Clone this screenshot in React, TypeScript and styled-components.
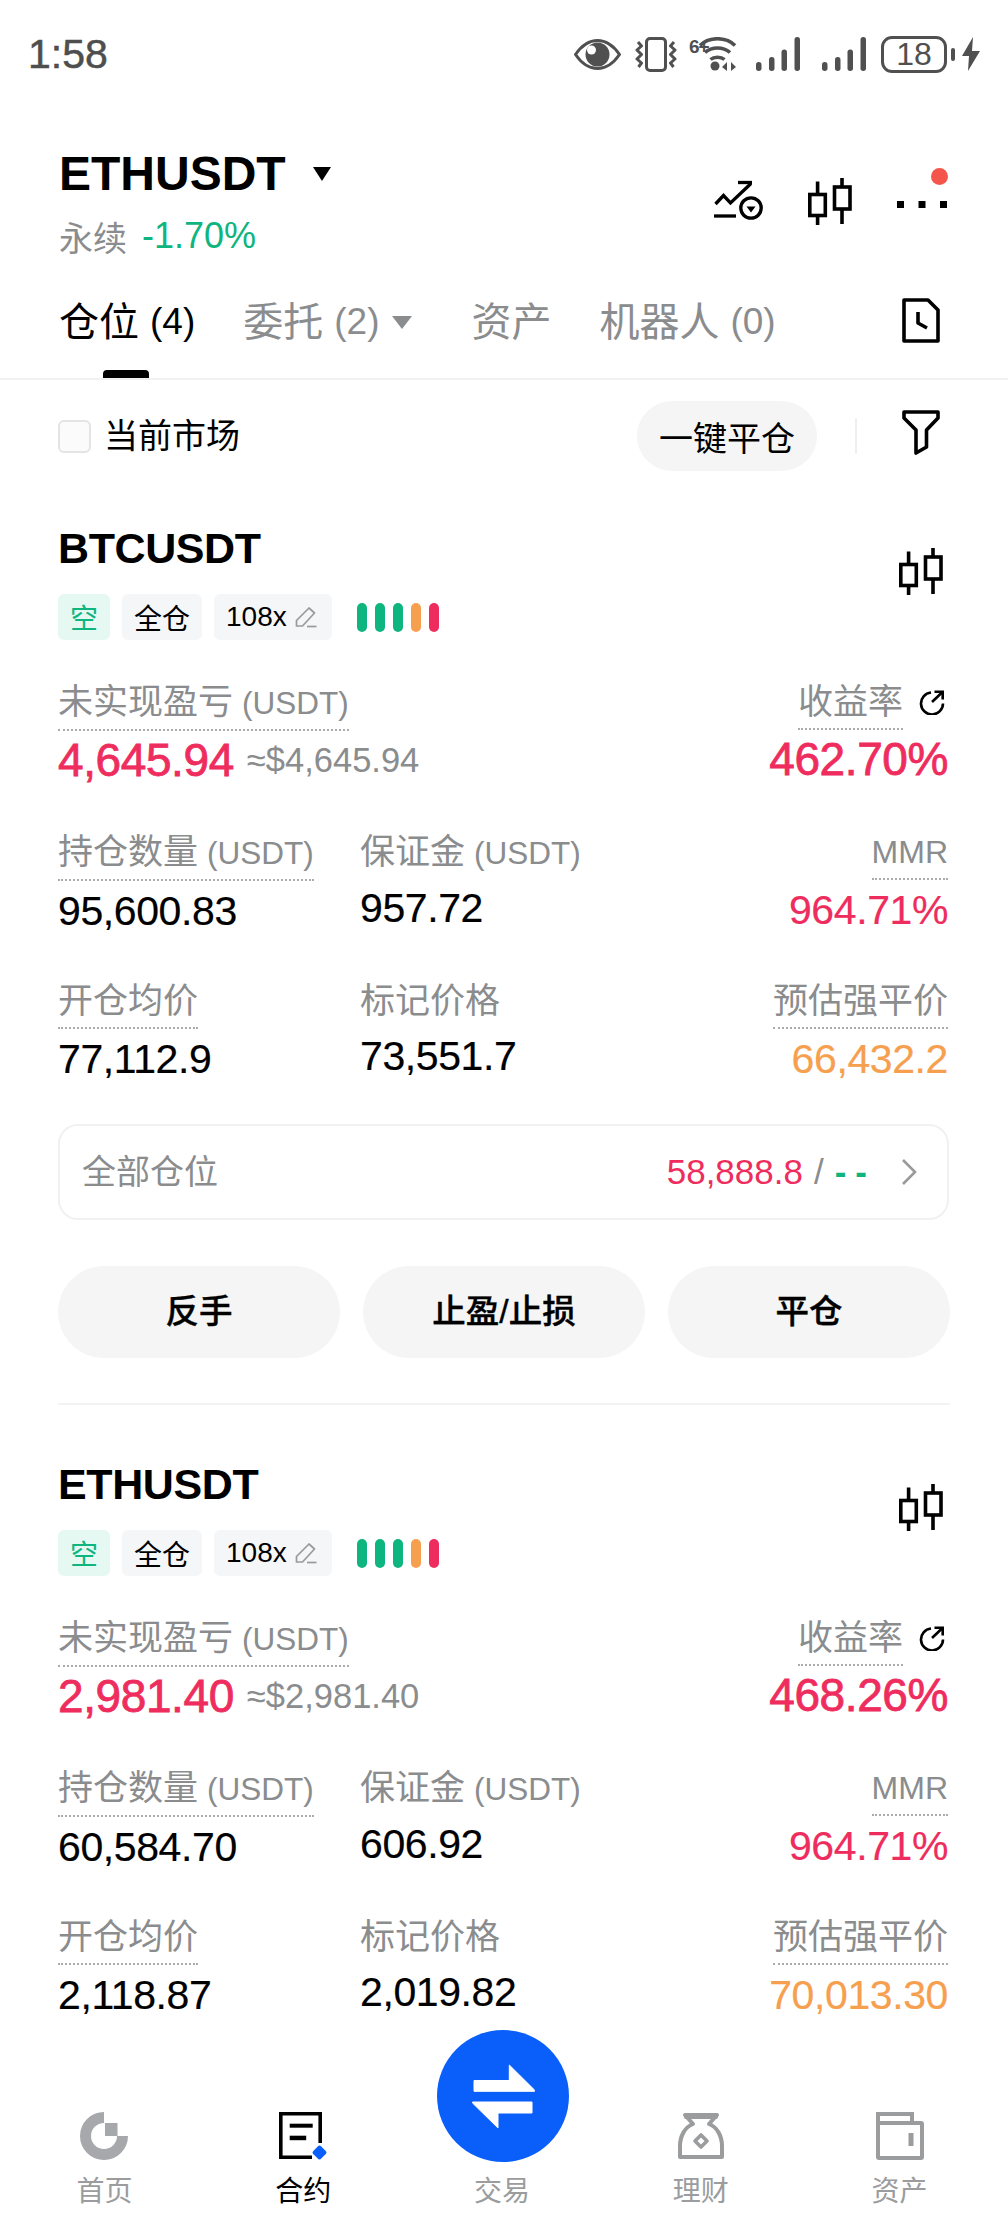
import React from "react";
import styled, { createGlobalStyle } from "styled-components";

const Global = createGlobalStyle`
  html, body { margin: 0; padding: 0; background: #fff; }
  body { font-family: "Liberation Sans", "Noto Sans CJK SC", sans-serif; color: #000; }
  * { box-sizing: border-box; }
`;

const RED = "#ee2d5e";
const GREEN = "#0fb57f";
const ORANGE = "#f6a04f";
const GREY = "#8a8c8e";

const Page = styled.div`
  width: 1008px; height: 2232px; overflow: hidden; display: flex; flex-direction: column; background: #fff;
`;
const StatusBar = styled.div`
  height: 108px; flex: none; display: flex; align-items: center; justify-content: space-between; padding: 0 28px 0 28px; color: #505050;
`;
const Time = styled.span`font-size: 41px; line-height: 48px; color: #4e4e4e; -webkit-text-stroke: 0.5px #4e4e4e;`;
const StatusIcons = styled.div`display: flex; align-items: center;`;
const StatusSlot = styled.span<{ $ml: number }>`
  display: flex; margin-left: ${p => p.$ml}px;
  svg { display: block; }
`;
const Battery = styled.span`
  position: relative; width: 66px; height: 37px; border: 3px solid #505050; border-radius: 11px;
  display: flex; align-items: center; justify-content: center; font-size: 32px; line-height: 1; color: #505050; margin-left: 15px;
  &::after { content: ""; position: absolute; right: -11px; top: 9px; width: 4px; height: 13px; border-radius: 2px; background: #505050; }
`;

const Header = styled.header`flex: none; padding: 38px 0 0 59px; display: flex; justify-content: space-between; height: 148px;`;
const TitleBlock = styled.div`display: flex; flex-direction: column;`;
const TitleRow = styled.div`display: flex; align-items: center; height: 56px;`;
const Title = styled.h1`margin: 0; font-size: 48px; line-height: 56px; font-weight: 700;`;
const Caret = styled.span<{ $color: string; $w: number; $h: number; $ml: number }>`
  display: inline-block; margin-left: ${p => p.$ml}px; width: 0; height: 0;
  border-left: ${p => p.$w / 2}px solid transparent; border-right: ${p => p.$w / 2}px solid transparent;
  border-top: ${p => p.$h}px solid ${p => p.$color};
`;
const SubRow = styled.div`display: flex; align-items: center; height: 40px; margin-top: 14px;`;
const SubLabel = styled.span`font-size: 34px; color: ${GREY};`;
const SubChange = styled.span`font-size: 36px; color: ${GREEN}; margin-left: 15px;`;
const HeaderIcons = styled.div`display: flex; align-items: flex-start; padding: 32px 61px 0 0; position: relative;`;
const HeaderIcon = styled.span<{ $ml: number; $mt: number }>`
  display: flex; margin-left: ${p => p.$ml}px; margin-top: ${p => p.$mt}px;
  svg { display: block; }
`;
const RedDot = styled.span`
  position: absolute; right: 60px; top: 22px; width: 17px; height: 17px; border-radius: 50%; background: #f4564c;
`;

const Tabs = styled.nav`
  flex: none; height: 82px; margin-top: 42px; padding: 0 68px 0 59px; display: flex; align-items: flex-start; gap: 48px; border-bottom: 2px solid #f1f1f1;
`;
const Tab = styled.span<{ $active?: boolean; $ml?: number }>`
  position: relative; height: 48px; font-size: 40px; line-height: 48px; display: flex; align-items: center; color: ${p => (p.$active ? "#000" : GREY)};
  margin-left: ${p => p.$ml || 0}px;
  ${p => p.$active && `&::after { content: ""; position: absolute; left: 44px; top: 72px; width: 46px; height: 8px; border-radius: 4px 4px 0 0; background: #000; }`}
`;
const TabCount = styled.span`font-size: 37px; margin-left: 11px;`;
const TabSpacer = styled.span`flex: 1;`;
const TabIcon = styled.span`display: flex; svg { display: block; }`;

const Toolbar = styled.div`flex: none; height: 95px; padding: 21px 68px 4px 58px; display: flex; align-items: center;`;
const Check = styled.label`display: flex; align-items: center; gap: 13px; font-size: 34px; line-height: 40px; flex: 1;`;
const CheckBox = styled.span`width: 33px; height: 33px; border: 2px solid #e4e4e4; border-radius: 6px; background: #fbfbfb;`;
const CloseAll = styled.button`
  width: 180px; height: 70px; border: 0; border-radius: 35px; background: #f5f5f5; font: inherit; font-size: 34px; color: #000; padding: 0;
`;
const ToolSep = styled.span`width: 2px; height: 36px; background: #f0f0f0; margin: 0 45px 0 38px;`;
const ToolIcon = styled.span`display: flex; margin-top: -7px; svg { display: block; }`;

const Body = styled.main`flex: 1; min-height: 0; overflow: hidden;`;
const Card = styled.section`padding: 49px 60px 45px 58px;`;
const Divider = styled.hr`margin: 0 58px 6px; border: 0; height: 2px; background: #f3f3f3;`;
const CardHead = styled.div`display: flex; justify-content: space-between; align-items: flex-start;`;
const Symbol = styled.h2`margin: 0; font-size: 43px; line-height: 48px; font-weight: 700; letter-spacing: -0.4px;`;
const Tags = styled.div`display: flex; align-items: center; gap: 12px; margin-top: 22px;`;
const Tag = styled.span<{ $short?: boolean; $pr?: number }>`
  height: 46px; padding: 0 ${p => p.$pr || 12}px 0 12px; border-radius: 6px; font-size: 28px; display: flex; align-items: center; gap: 8px;
  background: ${p => (p.$short ? "#e5f9f2" : "#f5f6f8")}; color: ${p => (p.$short ? GREEN : "#000")};
`;
const Bars = styled.span`display: flex; gap: 8px; margin-left: 13px;`;
const Bar = styled.i<{ $color: string }>`width: 10px; height: 29px; border-radius: 5px; background: ${p => p.$color}; display: block;`;
const HeadIcon = styled.span`display: flex; margin: 24px 5px 0 0; svg { display: block; }`;

const Metrics = styled.div<{ $mt: number }>`display: grid; grid-template-columns: 302px 1fr auto; margin-top: ${p => p.$mt}px;`;
const Metric = styled.div<{ $right?: boolean; $wide?: boolean }>`
  display: flex; flex-direction: column; align-items: ${p => (p.$right ? "flex-end" : "flex-start")};
  ${p => p.$wide && "grid-column: 1 / span 2;"}
`;
const LabelRow = styled.div`display: flex; align-items: flex-start; gap: 16px;`;
const Label = styled.span<{ $plain?: boolean; $latin?: boolean }>`
  font-size: ${p => (p.$latin ? 32 : 35)}px; line-height: 40px; color: ${GREY}; padding-bottom: 6px; white-space: nowrap;
  border-bottom: 2px dotted ${p => (p.$plain ? "transparent" : "#a9abad")};
`;
const Unit = styled.span`font-size: 31.5px; margin-left: 9px;`;
const Value = styled.div<{ $color?: string; $big?: boolean; $plain?: boolean }>`
  height: 48px; display: flex; align-items: center;
  font-size: ${p => (p.$big ? 46 : 41)}px; line-height: 48px; color: ${p => p.$color || "#000"};
  letter-spacing: -0.4px;
  -webkit-text-stroke: ${p => (p.$big ? 0.8 : 0.2)}px ${p => p.$color || "#000"};
  margin-top: ${p => (p.$plain ? 3 : p.$big ? 5 : 6)}px; white-space: nowrap;
`;
const ValueNote = styled.span`font-size: 34.5px; letter-spacing: 0; -webkit-text-stroke: 0; color: ${GREY}; margin-left: 13px;`;
const IconInline = styled.span`display: flex; margin: 7px 3px 0 0; svg { display: block; }`;

const Summary = styled.div`
  margin-top: 41px; height: 96px; border: 2px solid #f1f1f1; border-radius: 20px; display: flex; align-items: center; padding: 0 30px 0 22px; margin-right: -1px;
`;
const SummaryLabel = styled.span`font-size: 34px; color: ${GREY}; flex: 1; margin-top: -6px;`;
const SummaryValue = styled.span`font-size: 35px; color: ${RED};`;
const SummarySlash = styled.span`font-size: 35px; color: ${GREY}; margin: 0 11px;`;
const SummaryDash = styled.span`font-size: 35px; font-weight: 700; color: ${GREEN}; letter-spacing: 9px; margin-right: 25px;`;
const Actions = styled.div`display: grid; grid-template-columns: repeat(3, 1fr); gap: 23px; margin-top: 46px; margin-right: -2px;`;
const Action = styled.button`
  height: 92px; border: 0; border-radius: 46px; background: #f5f5f5; font: inherit; font-size: 33.5px; font-weight: 500; color: #000; padding: 0 0 7px;
  -webkit-text-stroke: 0.4px #000;
`;

const Nav = styled.nav`
  flex: none; height: 202px; position: relative; background: #fff; padding: 82px 9px 0 5px; display: grid; grid-template-columns: repeat(5, 1fr);
`;
const NavItem = styled.div<{ $active?: boolean }>`
  display: flex; flex-direction: column; align-items: center; gap: 14px; font-size: 28px; line-height: 36px; color: ${p => (p.$active ? "#000" : "#9a9c9e")};
`;
const NavIcon = styled.span`display: block; width: 48px; height: 48px; svg { display: block; }`;
const Fab = styled.span`
  position: absolute; left: 437px; top: 0; width: 132px; height: 132px; border-radius: 50%; background: #0a5ffb;
  svg { display: block; }
`;

const Candle = () => (
  <svg width="44" height="47" viewBox="0 0 44 47" fill="none" stroke="#000" strokeWidth="3.6">
    <rect x="1.8" y="16.5" width="15.5" height="21" />
    <path d="M9.6 3.5V16.5M9.6 37.5V47" />
    <rect x="26.5" y="9" width="15.5" height="22" />
    <path d="M34 0V9M34 31V46" />
  </svg>
);

const Eye = () => (
  <svg width="47" height="31" viewBox="0 0 47 31">
    <path d="M1.5 15.5C8 6 15 1.5 23.5 1.5S39 6 45.5 15.5C39 25 32 29.5 23.5 29.5S8 25 1.5 15.5Z" fill="none" stroke="#505050" strokeWidth="3" strokeLinejoin="round" />
    <circle cx="23.5" cy="15.5" r="12" fill="#505050" />
    <circle cx="17.5" cy="11" r="4.5" fill="#fff" />
  </svg>
);
const Vibrate = () => (
  <svg width="42" height="35" viewBox="0 0 42 35" fill="none" stroke="#505050" strokeWidth="3">
    <rect x="11.5" y="1.5" width="19" height="32" rx="3.5" />
    <path d="M3 5L6.5 9L2 13L6.5 17.5L2 22L6.5 26L3.5 30" strokeLinejoin="round" />
    <path d="M39 5L35.5 9L40 13L35.5 17.5L40 22L35.5 26L38.5 30" strokeLinejoin="round" />
  </svg>
);
const Wifi = () => (
  <svg width="48" height="35" viewBox="0 0 48 35" fill="none" stroke="#505050" strokeWidth="3.6">
    <text x="0" y="16" fontSize="19" fontWeight="700" fill="#505050" stroke="none" fontFamily="Liberation Sans" letterSpacing="-1">6+</text>
    <path d="M11 8.5C20 -0.5 37 -0.5 46 8.5" />
    <path d="M16 15.5C23 9.5 34 9.5 41 15.5" />
    <path d="M21.5 22.5C25 19.5 32 19.5 35.5 22.5" />
    <circle cx="26" cy="29" r="4.5" fill="#505050" stroke="none" />
    <path d="M38 25L33 30L38 34ZM42 25V34L47 30Z" fill="#505050" stroke="none" />
  </svg>
);
const Signal = () => (
  <svg width="44" height="34" viewBox="0 0 44 34" fill="#505050">
    <rect x="0" y="25" width="5.5" height="9" rx="2.7" />
    <rect x="13" y="20" width="5.5" height="14" rx="2.7" />
    <rect x="25.5" y="12.5" width="5.5" height="21.5" rx="2.7" />
    <rect x="38.5" y="0" width="5.5" height="34" rx="2.7" />
  </svg>
);
const Bolt = () => (
  <svg width="18" height="34" viewBox="0 0 18 34" fill="#505050">
    <path d="M11 0L0 19H7L6 34L18 14H10Z" />
  </svg>
);
const AlertIcon = () => (
  <svg width="49" height="41" viewBox="0 0 49 41" fill="none" stroke="#000" strokeWidth="3.3">
    <path d="M0 36H22" />
    <path d="M1.5 24L9.5 15.5L16.5 23L37 3.5" />
    <path d="M24 2.5H38" />
    <circle cx="37" cy="28" r="10.2" />
    <path d="M32.5 26.5H41.5L37 32.5Z" fill="#000" stroke="none" />
  </svg>
);
const Dots = () => (
  <svg width="50" height="7" viewBox="0 0 50 7" fill="#000">
    <rect x="0" width="7" height="7" />
    <rect x="21.5" width="7" height="7" />
    <rect x="43" width="7" height="7" />
  </svg>
);
const FileClock = () => (
  <svg width="38" height="45" viewBox="0 0 38 45" fill="none" stroke="#000" strokeWidth="3.6" strokeLinejoin="round">
    <path d="M2 2H26L36 12V43H2Z" />
    <path d="M16 14V25L25 30" />
  </svg>
);
const Funnel = () => (
  <svg width="38" height="45" viewBox="0 0 38 45" fill="none" stroke="#000" strokeWidth="3.6" strokeLinejoin="round">
    <path d="M2 2H36V8L24.5 20V37L14 43V20L2 8Z" />
  </svg>
);
const Pencil = () => (
  <svg width="22" height="22" viewBox="0 0 22 22" fill="none" stroke="#9a9a9a" strokeWidth="1.7" strokeLinejoin="round">
    <path d="M1.5 14.5L14 2L19.5 7L7.5 20H1.5Z" />
    <path d="M12 20.5H21.5" />
  </svg>
);
const Share = () => (
  <svg width="26" height="26" viewBox="0 0 26 26" fill="none" stroke="#000" strokeWidth="2.6">
    <path d="M12 3.5A11 11 0 1 0 24 14.5" />
    <path d="M13 13L23.5 3" />
    <path d="M15.5 2.7H23.7V10.5" />
  </svg>
);
const Chevron = () => (
  <svg width="16" height="28" viewBox="0 0 16 28" fill="none" stroke="#9a9a9a" strokeWidth="2.6">
    <path d="M2 2L14 14L2 26" />
  </svg>
);
const HomeIcon = () => (
  <svg width="48" height="48" viewBox="0 0 48 48" fill="#a6a8ab">
    <path d="M24 0A24 24 0 1 0 48 24H37A13 13 0 1 1 24 11Z" />
    <rect x="25" y="11" width="12.5" height="13" />
  </svg>
);
const ContractIcon = () => (
  <svg width="48" height="48" viewBox="0 0 48 48">
    <path d="M33 45.2H1.8V1.8H41.2V31" fill="none" stroke="#000" strokeWidth="3.6" />
    <rect x="10.7" y="11.7" width="23" height="4" />
    <rect x="10.7" y="23.7" width="16.5" height="4.5" />
    <rect x="35" y="35" width="11" height="11" rx="2.5" transform="rotate(45 40.5 40.5)" fill="#0a5ffb" />
  </svg>
);
const WealthIcon = () => (
  <svg width="48" height="48" viewBox="0 0 48 48" fill="none" stroke="#9a9c9e" strokeWidth="4" strokeLinejoin="round">
    <path d="M8 3H40L32 12C40 15 45 24 45 34V45H3V34C3 24 8 15 16 12Z" />
    <path d="M9 3H39V5H9Z" fill="#9a9c9e" />
    <path d="M24 23L30 29L24 35L18 29Z" strokeWidth="3.6" />
  </svg>
);
const WalletIcon = () => (
  <svg width="48" height="48" viewBox="0 0 48 48" fill="none" stroke="#9a9c9e" strokeWidth="4">
    <path d="M2 11V2H36V11" />
    <rect x="2" y="11" width="44" height="35" rx="1" />
    <rect x="32.5" y="21" width="5" height="13" fill="#9a9c9e" stroke="none" />
  </svg>
);
const SwapIcon = () => (
  <svg width="132" height="132" viewBox="0 0 132 132" fill="#fff" stroke="#fff" strokeWidth="1" strokeLinejoin="round">
    <path d="M37 50.5H72.3V35L97.5 60V61.3H37Z" />
    <path d="M35.5 72H95V83H61V98L35.5 73Z" />
  </svg>
);

type P = {
  symbol: string; pnl: string; pnlUsd: string; roe: string; size: string; margin: string;
  entry: string; mark: string; liq: string; cut?: boolean;
};
const positions: P[] = [
  { symbol: "BTCUSDT", pnl: "4,645.94", pnlUsd: "≈$4,645.94", roe: "462.70%", size: "95,600.83", margin: "957.72", entry: "77,112.9", mark: "73,551.7", liq: "66,432.2" },
  { symbol: "ETHUSDT", pnl: "2,981.40", pnlUsd: "≈$2,981.40", roe: "468.26%", size: "60,584.70", margin: "606.92", entry: "2,118.87", mark: "2,019.82", liq: "70,013.30", cut: true },
];
const barColors = [GREEN, GREEN, GREEN, ORANGE, RED];

const Position = ({ p }: { p: P }) => (
  <Card>
    <CardHead>
      <div>
        <Symbol>{p.symbol}</Symbol>
        <Tags>
          <Tag $short>空</Tag>
          <Tag>全仓</Tag>
          <Tag $pr={15}>108x<Pencil /></Tag>
          <Bars>{barColors.map((c, i) => <Bar key={i} $color={c} />)}</Bars>
        </Tags>
      </div>
      <HeadIcon><Candle /></HeadIcon>
    </CardHead>
    <Metrics $mt={42}>
      <Metric $wide>
        <Label>未实现盈亏<Unit>(USDT)</Unit></Label>
        <Value $big $color={RED}>{p.pnl}<ValueNote>{p.pnlUsd}</ValueNote></Value>
      </Metric>
      <Metric $right>
        <LabelRow><Label>收益率</Label><IconInline><Share /></IconInline></LabelRow>
        <Value $big $color={RED}>{p.roe}</Value>
      </Metric>
    </Metrics>
    <Metrics $mt={48}>
      <Metric>
        <Label>持仓数量<Unit>(USDT)</Unit></Label>
        <Value>{p.size}</Value>
      </Metric>
      <Metric>
        <Label $plain>保证金<Unit>(USDT)</Unit></Label>
        <Value $plain>{p.margin}</Value>
      </Metric>
      <Metric $right>
        <Label $latin>MMR</Label>
        <Value $color={RED}>964.71%</Value>
      </Metric>
    </Metrics>
    <Metrics $mt={46}>
      <Metric>
        <Label>开仓均价</Label>
        <Value>{p.entry}</Value>
      </Metric>
      <Metric>
        <Label $plain>标记价格</Label>
        <Value $plain>{p.mark}</Value>
      </Metric>
      <Metric $right>
        <Label>预估强平价</Label>
        <Value $color={ORANGE}>{p.liq}</Value>
      </Metric>
    </Metrics>
    {!p.cut && (
      <>
        <Summary>
          <SummaryLabel>全部仓位</SummaryLabel>
          <SummaryValue>58,888.8</SummaryValue>
          <SummarySlash>/</SummarySlash>
          <SummaryDash>--</SummaryDash>
          <Chevron />
        </Summary>
        <Actions>
          <Action>反手</Action>
          <Action>止盈/止损</Action>
          <Action>平仓</Action>
        </Actions>
      </>
    )}
  </Card>
);

export default function App() {
  return (
    <Page>
      <Global />
      <StatusBar>
        <Time>1:58</Time>
        <StatusIcons>
          <StatusSlot $ml={0}><Eye /></StatusSlot>
          <StatusSlot $ml={14}><Vibrate /></StatusSlot>
          <StatusSlot $ml={12}><Wifi /></StatusSlot>
          <StatusSlot $ml={19}><Signal /></StatusSlot>
          <StatusSlot $ml={22}><Signal /></StatusSlot>
          <Battery>18</Battery>
          <StatusSlot $ml={15}><Bolt /></StatusSlot>
        </StatusIcons>
      </StatusBar>
      <Header>
        <TitleBlock>
          <TitleRow><Title>ETHUSDT</Title><Caret $color="#000" $w={19} $h={14} $ml={27} /></TitleRow>
          <SubRow><SubLabel>永续</SubLabel><SubChange>-1.70%</SubChange></SubRow>
        </TitleBlock>
        <HeaderIcons>
          <HeaderIcon $ml={0} $mt={2}><AlertIcon /></HeaderIcon>
          <HeaderIcon $ml={45} $mt={0}><Candle /></HeaderIcon>
          <HeaderIcon $ml={45} $mt={23}><Dots /></HeaderIcon>
          <RedDot />
        </HeaderIcons>
      </Header>
      <Tabs>
        <Tab $active>仓位<TabCount>(4)</TabCount></Tab>
        <Tab>委托<TabCount>(2)</TabCount><Caret $color={GREY} $w={21} $h={13} $ml={13} /></Tab>
        <Tab $ml={11}>资产</Tab>
        <Tab>机器人<TabCount>(0)</TabCount></Tab>
        <TabSpacer />
        <TabIcon><FileClock /></TabIcon>
      </Tabs>
      <Toolbar>
        <Check><CheckBox />当前市场</Check>
        <CloseAll>一键平仓</CloseAll>
        <ToolSep />
        <ToolIcon><Funnel /></ToolIcon>
      </Toolbar>
      <Body>
        <Position p={positions[0]} />
        <Divider />
        <Position p={positions[1]} />
      </Body>
      <Nav>
        <NavItem><NavIcon><HomeIcon /></NavIcon>首页</NavItem>
        <NavItem $active><NavIcon><ContractIcon /></NavIcon>合约</NavItem>
        <NavItem><NavIcon />交易</NavItem>
        <NavItem><NavIcon><WealthIcon /></NavIcon>理财</NavItem>
        <NavItem><NavIcon><WalletIcon /></NavIcon>资产</NavItem>
        <Fab><SwapIcon /></Fab>
      </Nav>
    </Page>
  );
}
